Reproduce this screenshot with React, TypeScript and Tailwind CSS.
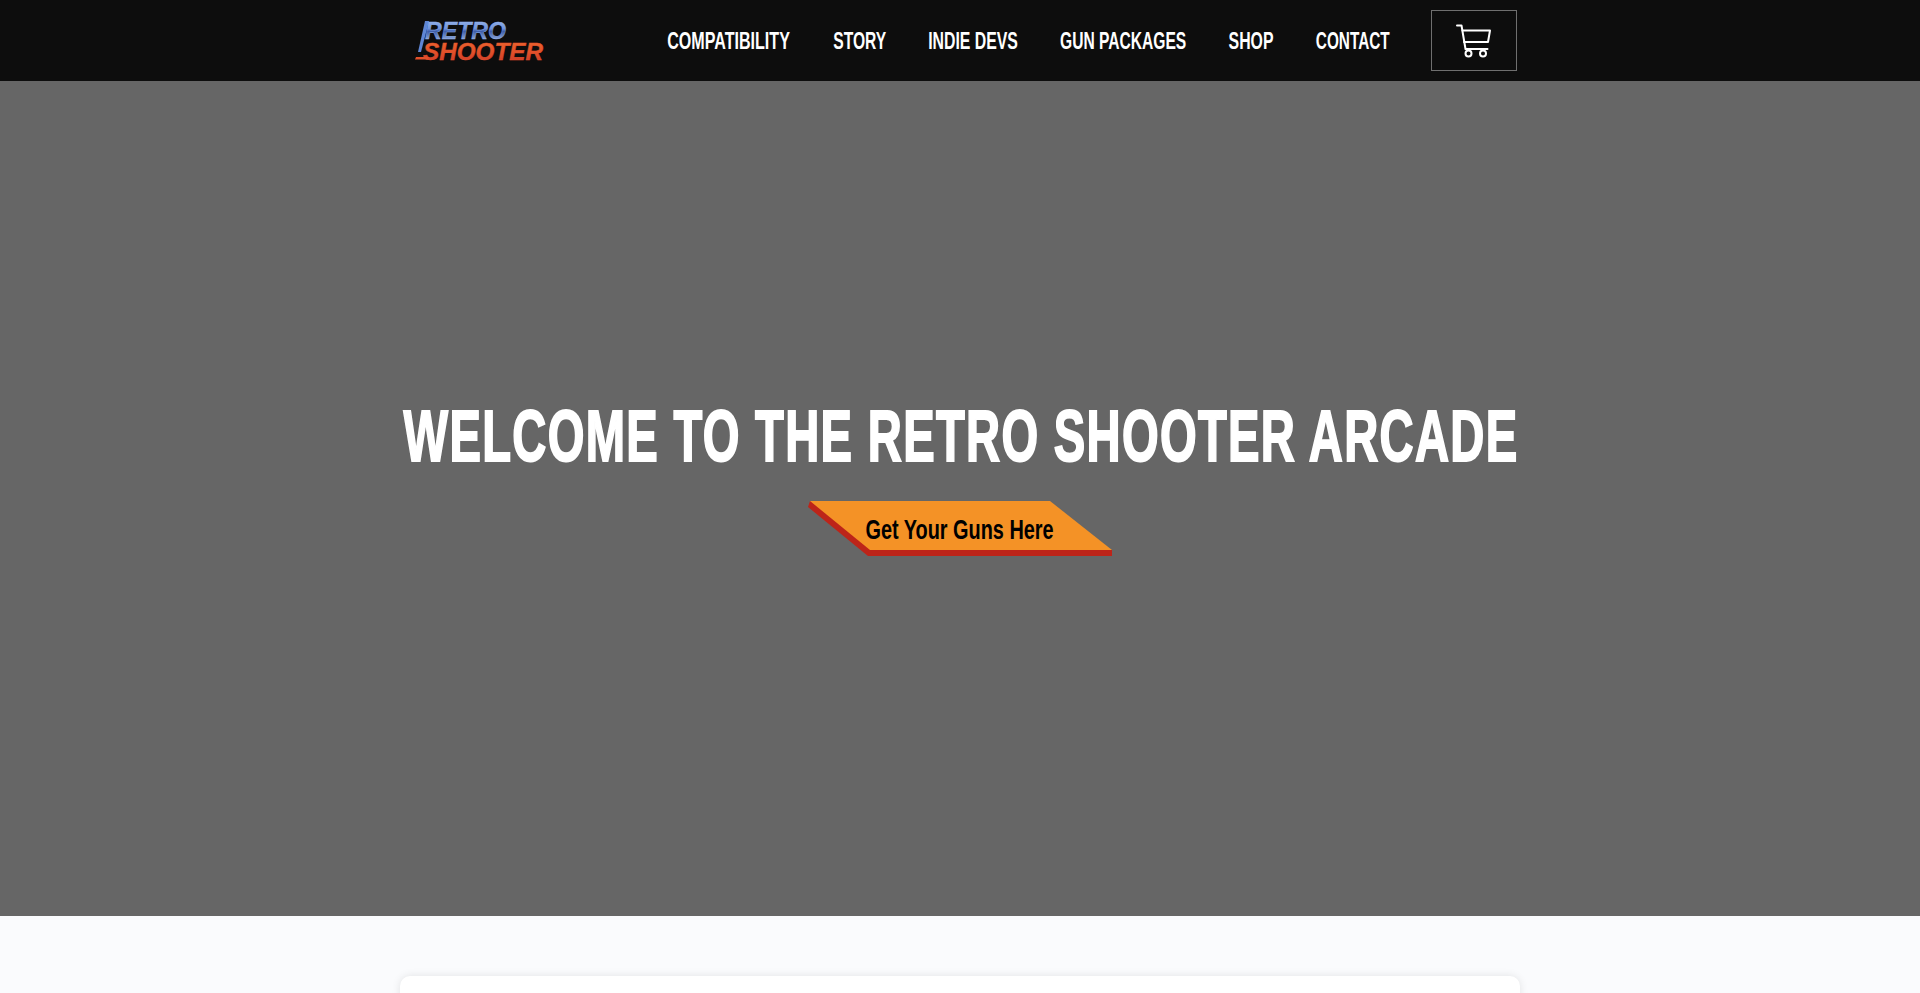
import React from "react";

const links = [
  { label: "COMPATIBILITY", w: "w-[125px]", s: "scale-x-[0.67]" },
  { label: "STORY", w: "w-[53px]", s: "scale-x-[0.65]" },
  { label: "INDIE DEVS", w: "w-[91px]", s: "scale-x-[0.66]" },
  { label: "GUN PACKAGES", w: "w-[125px]", s: "scale-x-[0.65]" },
  { label: "SHOP", w: "w-[46px]", s: "scale-x-[0.66]" },
  { label: "CONTACT", w: "w-[74px]", s: "scale-x-[0.64]" },
];

function Logo() {
  return (
    <svg width="132" height="46" viewBox="0 0 132 46" className="block">
      <defs>
        <linearGradient id="blue" x1="0" y1="0" x2="0" y2="1">
          <stop offset="0" stopColor="#a5c0f0" />
          <stop offset="0.45" stopColor="#6f93dc" />
          <stop offset="0.55" stopColor="#3e5da8" />
          <stop offset="1" stopColor="#b5cbf0" />
        </linearGradient>
        <linearGradient id="red" x1="0" y1="0" x2="0" y2="1">
          <stop offset="0" stopColor="#ef6a2e" />
          <stop offset="0.55" stopColor="#e2502a" />
          <stop offset="1" stopColor="#c8382a" />
        </linearGradient>
      </defs>
      <polygon points="10,3 14,3 6,34 3,34" fill="#5f86d4" />
      <text x="10" y="20.5" fontFamily="'Liberation Sans', sans-serif" fontWeight="700" fontStyle="italic" fontSize="24" textLength="81" lengthAdjust="spacingAndGlyphs" fill="url(#blue)" stroke="#8fb0ec" strokeWidth="0.4">RETRO</text>
      <text x="8" y="41.5" fontFamily="'Liberation Sans', sans-serif" fontWeight="700" fontStyle="italic" fontSize="24" textLength="120" lengthAdjust="spacingAndGlyphs" fill="url(#red)" stroke="#e2502a" strokeWidth="0.4">SHOOTER</text>
      <polygon points="1,39 14,39 13,41.5 0,41.5" fill="#e2502a" />
    </svg>
  );
}

export default function App() {
  return (
    <div className="h-[993px] overflow-hidden bg-[#fafbfd] font-['Liberation_Sans',sans-serif]">
      <header className="h-[81px] bg-[#0d0d0d]">
        <div className="mx-auto flex h-full w-[1120px] items-center pl-[15px] pr-[3px]">
          <Logo />
          <nav className="ml-auto flex items-center gap-[42px]">
            {links.map((l) => (
              <a key={l.label} className={`flex justify-center whitespace-nowrap ${l.w}`}>
                <span className={`text-[24px] font-bold leading-none text-white ${l.s}`}>{l.label}</span>
              </a>
            ))}
            <button className="-ml-[1px] flex h-[61px] w-[86px] items-center justify-center border border-[#6f6f6f]">
              <svg width="36" height="34" viewBox="0 0 36 34" fill="none" stroke="#fff" strokeWidth="2" strokeLinecap="round" strokeLinejoin="round">
                <path d="M1 1.5h4.5l4 23.5h22" />
                <path d="M6.5 6.5h27.5l-2 11.5h-24" />
                <circle cx="12.5" cy="29.5" r="3" />
                <circle cx="27" cy="29.5" r="3" />
              </svg>
            </button>
          </nav>
        </div>
      </header>
      <section className="flex h-[835px] flex-col items-center bg-[#666666] pt-[310px]">
        <h1 className="ml-[2px] flex h-[90px] w-[1115px] items-center justify-center whitespace-nowrap">
          <span className="scale-x-[0.655] text-[72px] font-bold leading-none tracking-[2px] text-white [-webkit-text-stroke:2px_white]">
            WELCOME TO THE RETRO SHOOTER ARCADE
          </span>
        </h1>
        <a className="relative mt-[20px] flex h-[55px] w-[304px] items-center justify-center">
          <span className="absolute inset-0 bg-[#bd2419] [clip-path:polygon(0_6px,60px_100%,100%_100%,100%_49px,2px_0)]" />
          <span className="absolute inset-0 bg-[#f49226] [clip-path:polygon(2px_0,242px_0,100%_49px,62px_49px)]" />
          <span className="relative mt-[2px] scale-x-[0.71] whitespace-nowrap text-[28px] font-bold leading-none text-black">Get Your Guns Here</span>
        </a>
      </section>
      <main className="mx-auto mt-[60px] h-[200px] w-[1120px] rounded-[10px] bg-white shadow-[0_0_8px_rgba(0,0,0,0.1)]" />
    </div>
  );
}
